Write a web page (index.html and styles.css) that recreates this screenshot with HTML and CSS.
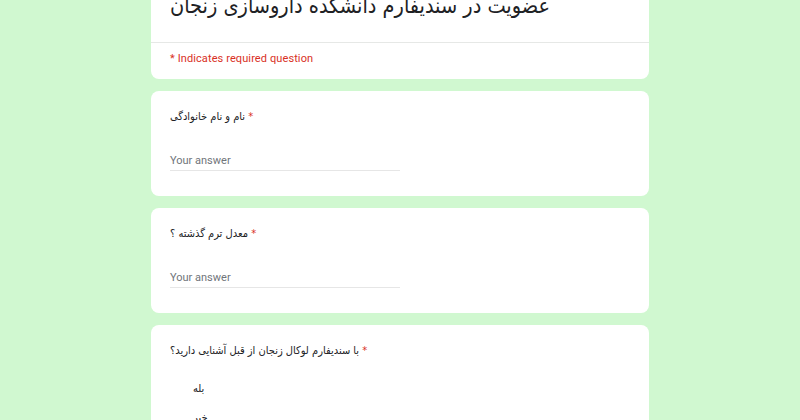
FILE: index.html
```html
<!DOCTYPE html>
<html lang="fa">
<head>
<meta charset="utf-8">
<title>فرم عضویت</title>
<link rel="stylesheet" href="styles.css">
</head>
<body>
<div class="form">
  <div class="card head-card">
    <div class="title-block">
      <div class="title">عضویت در سندیفارم دانشکده داروسازی زنجان</div>
    </div>
    <div class="required-note">* Indicates required question</div>
  </div>

  <div class="card question">
    <div class="q-label"><span>نام و نام خانوادگی</span><span class="star"> *</span></div>
    <div class="answer"><span class="placeholder">Your answer</span></div>
  </div>

  <div class="card question">
    <div class="q-label"><span>معدل ترم گذشته ؟</span><span class="star"> *</span></div>
    <div class="answer"><span class="placeholder">Your answer</span></div>
  </div>

  <div class="card question">
    <div class="q-label"><span>با سندیفارم لوکال زنجان از قبل آشنایی دارید؟</span><span class="star"> *</span></div>
    <div class="options">
      <div class="option">بله</div>
      <div class="option">خیر</div>
    </div>
  </div>
</div>
</body>
</html>
```

FILE: styles.css
```css
html, body {
  margin: 0;
  padding: 0;
  background: #d0f8d0;
  font-family: Roboto, "DejaVu Sans", sans-serif;
  color: #202124;
}

.form {
  width: 498px;
  margin: -33px auto 0;
  display: flex;
  flex-direction: column;
  gap: 12px;
}

.card {
  background: #ffffff;
  border-radius: 8px;
  box-sizing: border-box;
}

.title-block {
  padding: 23px 19px 20px;
  border-bottom: 1px solid #e6e8e6;
}

.title {
  font-family: "DejaVu Sans Condensed", "DejaVu Sans", sans-serif;
  font-stretch: condensed;
  font-size: 21.5px;
  line-height: 32px;
  white-space: nowrap;
  color: #202124;
}

.required-note {
  padding: 8px 19px 12px;
  font-size: 11px;
  line-height: 16px;
  letter-spacing: 0.1px;
  color: #d93025;
}

.question {
  padding: 18px 19px 25px;
}

.q-label {
  font-family: "DejaVu Sans Condensed", "DejaVu Sans", sans-serif;
  font-stretch: condensed;
  font-size: 11px;
  line-height: 16px;
  color: #202124;
}

.star {
  color: #d93025;
}

.answer {
  margin-top: 28px;
  width: 230px;
  padding-bottom: 1px;
  border-bottom: 1px solid #e6e6e6;
}

.placeholder {
  display: block;
  font-size: 11px;
  line-height: 16px;
  color: #70757a;
}

.options {
  margin-top: 22px;
  padding-left: 23px;
  display: flex;
  flex-direction: column;
  gap: 13px;
}

.option {
  font-family: "DejaVu Sans Condensed", "DejaVu Sans", sans-serif;
  font-stretch: condensed;
  font-size: 11px;
  line-height: 16px;
  color: #202124;
}
```
